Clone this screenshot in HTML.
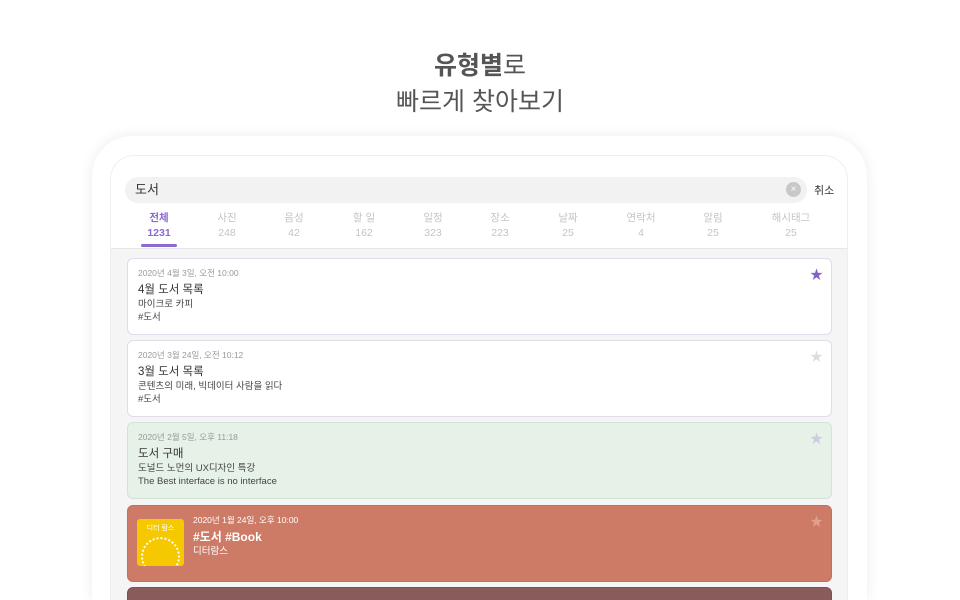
<!DOCTYPE html>
<html><head><meta charset="utf-8"><style>
*{margin:0;padding:0;box-sizing:border-box}
html,body{width:960px;height:600px;overflow:hidden}
body{background:#fff;font-family:"Liberation Sans","Noto Sans CJK KR",sans-serif;position:relative}
.t1{position:absolute;top:50px;width:960px;text-align:center;font-size:25px;color:#555;line-height:32px}
.t2{position:absolute;top:86px;width:960px;text-align:center;font-size:25px;color:#555;line-height:32px}
.frame{position:absolute;left:92px;top:136px;width:775px;height:464px;background:#fff;border-radius:40px 40px 0 0;box-shadow:0 0 14px rgba(0,0,0,.08)}
.screen{position:absolute;left:110px;top:155px;width:738px;height:445px;background:#f5f5f5;border-radius:24px 24px 0 0;overflow:hidden;border:1px solid #eee;border-bottom:none}
.head{position:absolute;left:0;top:0;width:738px;height:93px;background:#fff;border-bottom:1px solid #e6e6e6}
.search{position:absolute;left:14px;top:21px;width:682px;height:26px;background:#f2f2f2;border-radius:13px;font-size:13px;color:#333;line-height:26px;padding-left:10px}
.clr{position:absolute;right:6px;top:5px;width:15px;height:15px;border-radius:50%;background:#c8c8c8;color:#fff;font-size:10px;line-height:15px;text-align:center}
.cancel{position:absolute;left:703px;top:26px;font-size:11px;color:#333}
.tab{position:absolute;top:55px;width:70px;margin-left:-35px;text-align:center;font-size:10.5px;color:#c4c4c4;line-height:15px}
.tab.a{color:#8a6cd0;font-weight:bold}
.bar{position:absolute;left:30px;top:88px;width:36px;height:3px;border-radius:2px;background:#8a6cd0}
.card{position:absolute;left:16px;width:705px;height:77px;border:1px solid #dedde8;border-radius:6px;background:#fff;padding:8px 0 0 10px}
.d{font-size:8.5px;color:#999;line-height:12px}
.h{font-size:11.5px;color:#333;line-height:16px;margin-top:3px}
.s{font-size:9.5px;color:#444;line-height:13px}
.star{position:absolute;right:8px;top:5px;font-size:13px;color:#ddd}
</style></head><body>
<div class="t1"><b>유형별</b>로</div>
<div class="t2">빠르게 찾아보기</div>
<div class="frame"></div>
<div class="screen">
 <div class="head">
  <div class="search">도서<div class="clr">×</div></div>
  <div class="cancel">취소</div>
  <div class="tab a" style="left:48px">전체<br>1231</div>
  <div class="tab" style="left:116px">사진<br>248</div>
  <div class="tab" style="left:183px">음성<br>42</div>
  <div class="tab" style="left:253px">할 일<br>162</div>
  <div class="tab" style="left:322px">일정<br>323</div>
  <div class="tab" style="left:389px">장소<br>223</div>
  <div class="tab" style="left:457px">날짜<br>25</div>
  <div class="tab" style="left:530px">연락처<br>4</div>
  <div class="tab" style="left:602px">알림<br>25</div>
  <div class="tab" style="left:680px">해시태그<br>25</div>
  <div class="bar"></div>
 </div>
 <div class="card" style="top:102px"><div class="d">2020년 4월 3일, 오전 10:00</div><div class="h">4월 도서 목록</div><div class="s">마이크로 카피</div><div class="s">#도서</div><div class="star" style="color:#7f62cc">★</div></div>
 <div class="card" style="top:184px"><div class="d">2020년 3월 24일, 오전 10:12</div><div class="h">3월 도서 목록</div><div class="s">콘텐츠의 미래, 빅데이터 사람을 읽다</div><div class="s">#도서</div><div class="star">★</div></div>
 <div class="card" style="top:266px;background:#e6f1e8;border-color:#d3e3d6"><div class="d">2020년 2월 5일, 오후 11:18</div><div class="h">도서 구매</div><div class="s">도널드 노먼의 UX디자인 특강</div><div class="s">The Best interface is no interface</div><div class="star" style="color:#ccd">★</div></div>
 <div class="card" style="top:349px;background:#cd7b67;border-color:#c07060">
  <div style="position:absolute;left:9px;top:13px;width:47px;height:47px;background:#f5c800;border-radius:3px;color:#fff;font-size:7px;text-align:center;padding-top:4px;overflow:hidden">디터 람스<div style="position:absolute;left:4px;top:18px;width:39px;height:39px;border-radius:50%;border:2px dotted #fff"></div></div>
  <div style="position:absolute;left:65px;top:8px"><div class="d" style="color:#fff">2020년 1월 24일, 오후 10:00</div><div class="h" style="color:#fff;font-weight:bold;font-size:12px">#도서 #Book</div><div class="s" style="color:#fff">디터람스</div></div>
  <div class="star" style="color:#e0a090">★</div></div>
 <div class="card" style="top:431px;height:14px;border-radius:6px 6px 0 0;background:#8a5b5b;border-color:#7a5050"></div>
</div>
</body></html>
